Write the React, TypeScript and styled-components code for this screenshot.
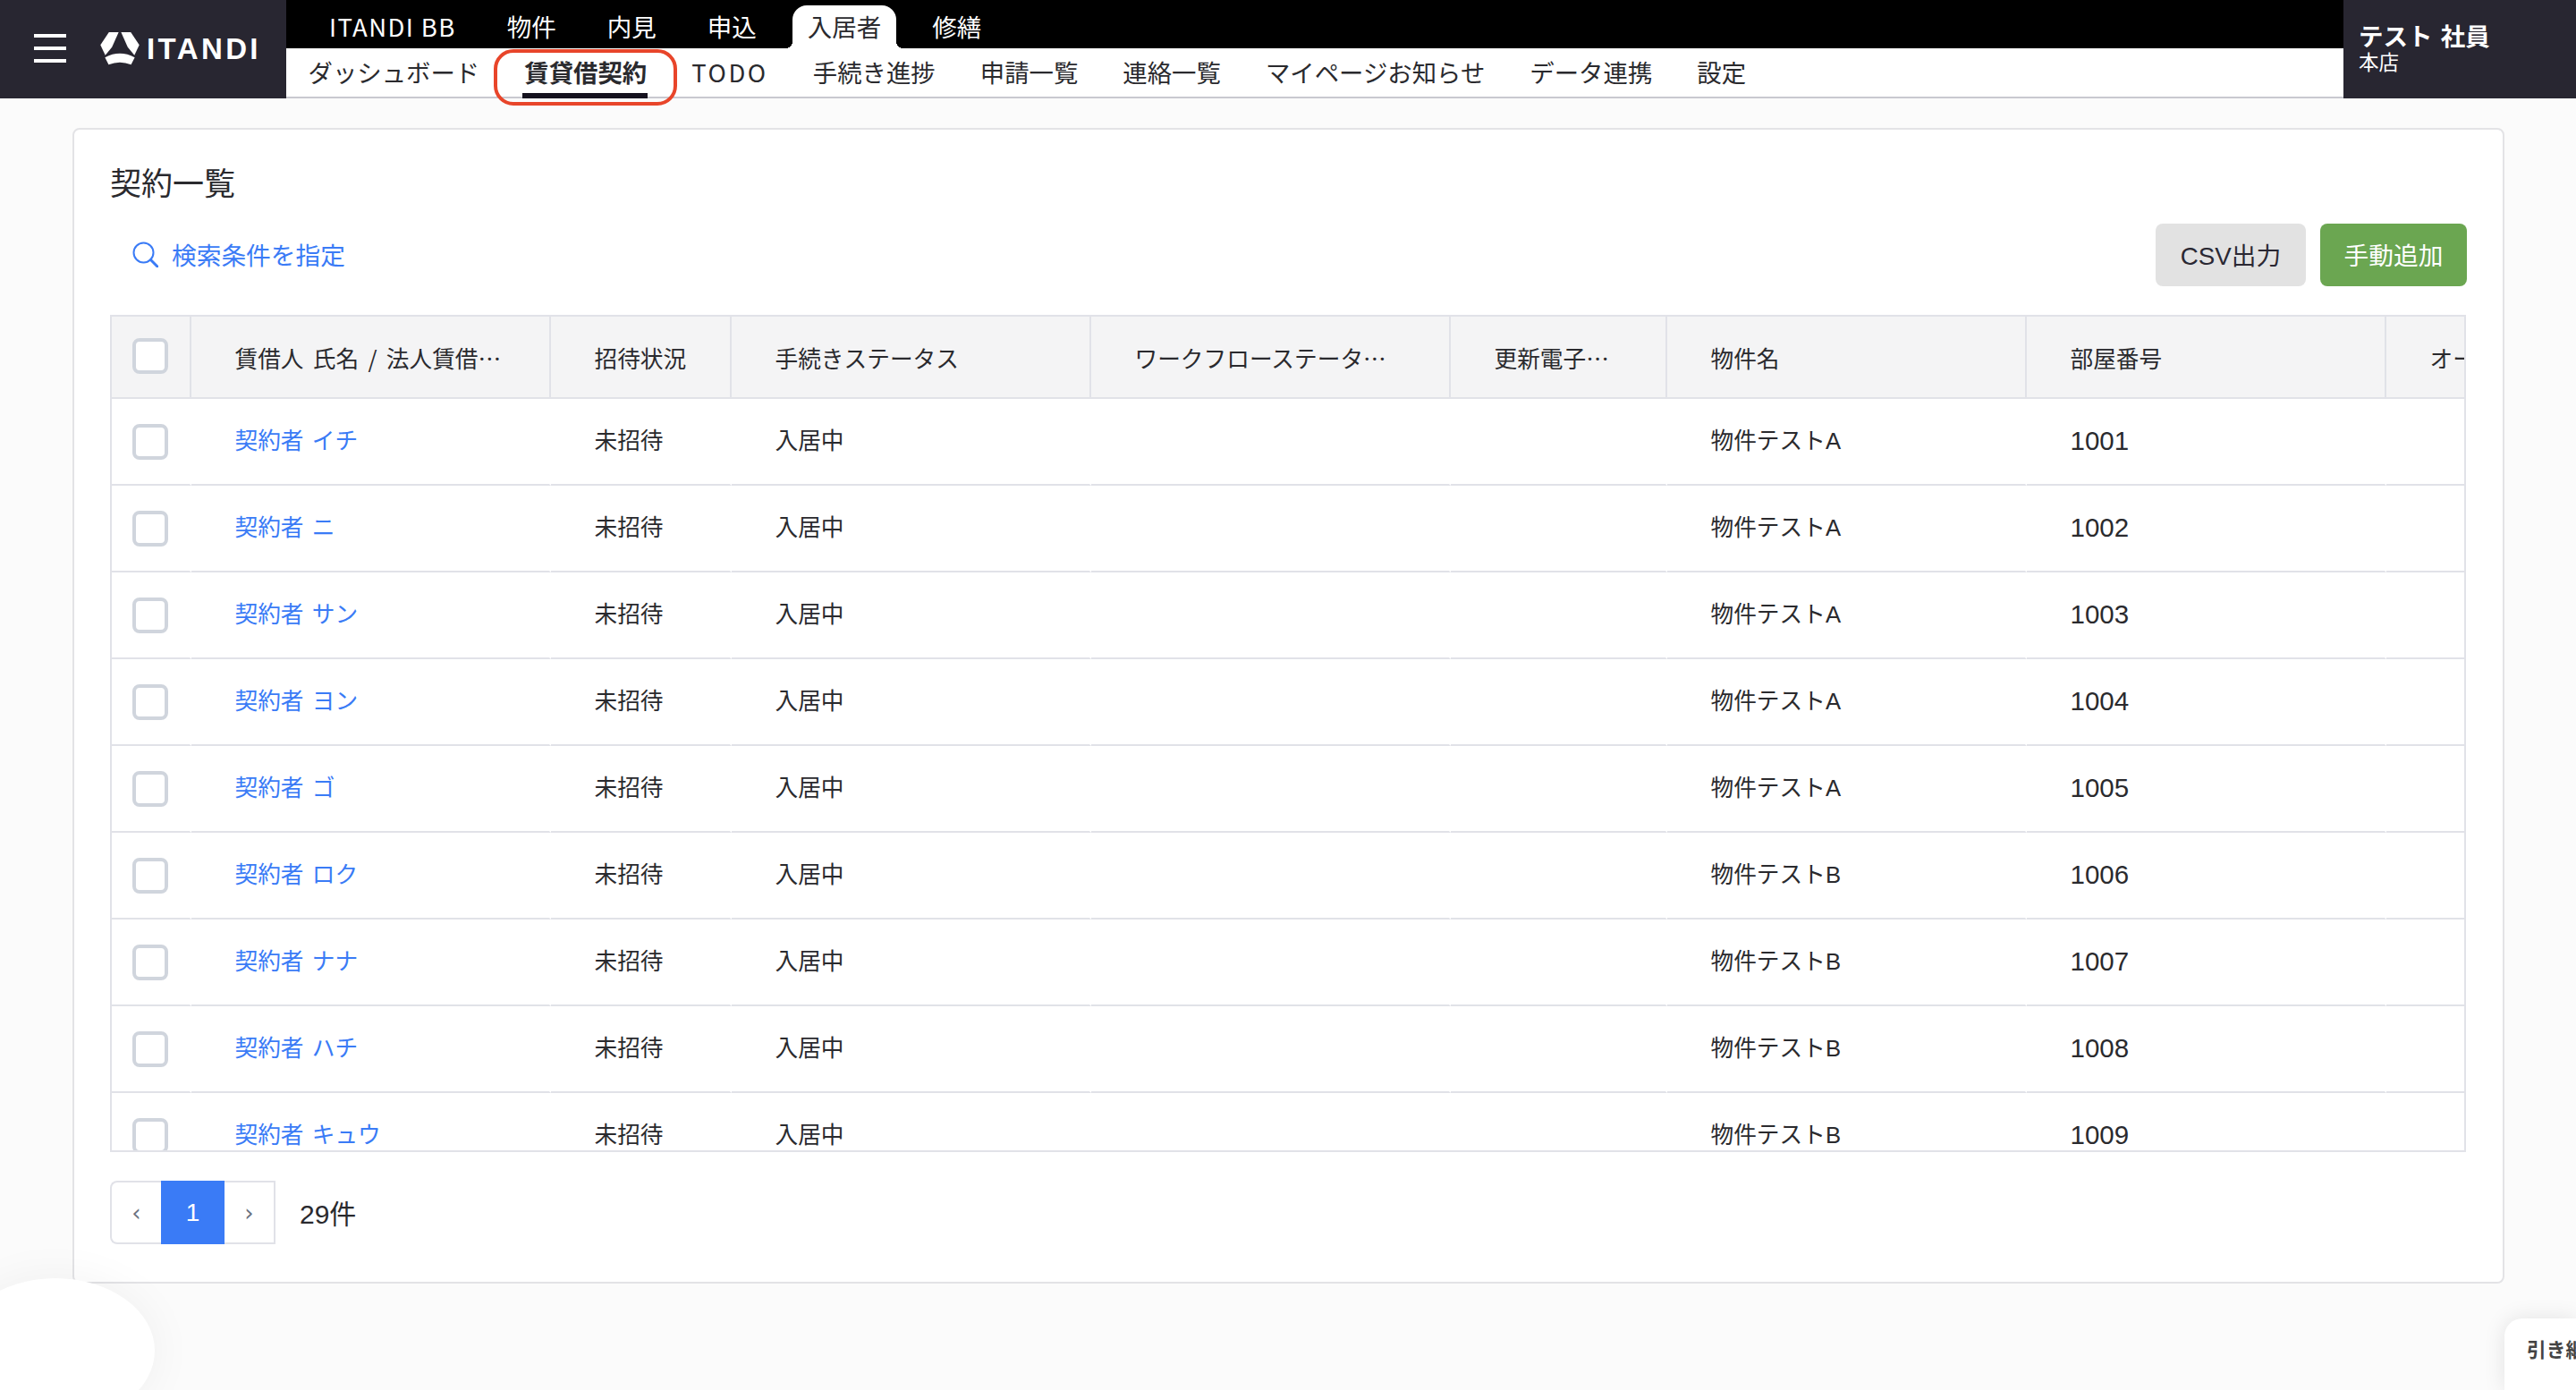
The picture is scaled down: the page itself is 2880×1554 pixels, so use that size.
import styled, { createGlobalStyle } from 'styled-components'

const latinFont = '"Liberation Sans", "Noto Sans CJK JP", sans-serif'
const jaFont = '"Noto Sans CJK JP", "Liberation Sans", sans-serif'

const GlobalStyle = createGlobalStyle`
  html, body {
    margin: 0;
    padding: 0;
    background: #fbfbfb;
  }
  body {
    font-family: ${latinFont};
    color: #2a2a2e;
    overflow: hidden;
  }
  * {
    box-sizing: border-box;
  }
`

const Page = styled.div`
  position: relative;
  width: 2880px;
  height: 1554px;
  overflow: hidden;
`

const Header = styled.header`
  display: grid;
  grid-template-columns: 320px 1fr 260px;
  height: 110px;
`

const Brand = styled.div`
  display: flex;
  align-items: center;
  gap: 38px;
  padding: 0 0 2px 38px;
  background: #282631;
`

const Burger = styled.div`
  display: flex;
  flex-direction: column;
  gap: 10px;
  width: 36px;

  span {
    display: block;
    height: 4px;
    background: #fff;
  }
`

const Logo = styled.div`
  display: flex;
  align-items: center;
  gap: 8px;
  color: #fff;
`

const LogoName = styled.span`
  font-family: "Liberation Sans", sans-serif;
  font-size: 33px;
  font-weight: 700;
  letter-spacing: 3.4px;
  line-height: 1;
`

const NavColumn = styled.div`
  display: flex;
  flex-direction: column;
`

const TopNav = styled.nav`
  display: flex;
  align-items: flex-end;
  gap: 23px;
  height: 54px;
  padding-left: 31px;
  background: #000;
`

const TopItem = styled.a<{ $active?: boolean; $latin?: boolean }>`
  position: relative;
  display: flex;
  align-items: center;
  height: 48px;
  padding: 0 17px 1px;
  border-radius: 16px 16px 0 0;
  font-family: ${jaFont};
  font-size: 27.5px;
  letter-spacing: ${(p) => (p.$latin ? '1.4px' : '0')};
  line-height: 1;
  color: ${(p) => (p.$active ? '#2a2a2e' : '#fff')};
  background: ${(p) => (p.$active ? '#fff' : 'transparent')};

  ${(p) =>
    p.$active &&
    `
    &::before, &::after {
      content: '';
      position: absolute;
      bottom: 0;
      width: 8px;
      height: 8px;
    }
    &::before {
      left: -8px;
      background: radial-gradient(circle at 0 0, transparent 8px, #fff 8px);
    }
    &::after {
      right: -8px;
      background: radial-gradient(circle at 100% 0, transparent 8px, #fff 8px);
    }
  `}
`

const SubNav = styled.nav`
  display: flex;
  align-items: stretch;
  gap: 50px;
  height: 56px;
  padding-left: 24.5px;
  background: #fff;
  border-bottom: 2px solid #c9c9d0;
`

const SubItem = styled.a<{ $active?: boolean; $latin?: boolean }>`
  position: relative;
  display: flex;
  align-items: center;
  font-family: ${jaFont};
  font-size: 27.4px;
  font-weight: ${(p) => (p.$active ? 700 : 400)};
  letter-spacing: ${(p) => (p.$latin ? '2.6px' : '0')};
  line-height: 1;
  white-space: nowrap;
  color: #2a2a2e;

  ${(p) =>
    p.$active &&
    `
    &::after {
      content: '';
      position: absolute;
      left: -2px;
      right: -1px;
      bottom: -2px;
      height: 6px;
      background: #15121f;
    }
  `}
`

const Callout = styled.span`
  position: absolute;
  top: 1px;
  left: -34px;
  right: -34px;
  height: 63px;
  border: 4px solid #e8452a;
  border-radius: 22px;
  z-index: 3;
`

const UserBox = styled.div`
  display: flex;
  flex-direction: column;
  justify-content: flex-start;
  padding: 24px 0 0 17px;
  background: #282631;
  color: #fff;
`

const UserName = styled.div`
  font-family: ${jaFont};
  font-size: 27.5px;
  font-weight: 700;
  line-height: 31px;
  word-spacing: 3px;
`

const UserShop = styled.div`
  font-family: ${jaFont};
  font-size: 22.5px;
  line-height: 26px;
`

const Main = styled.main`
  padding: 33px 80px 0 81px;
`

const Card = styled.section`
  height: 1292px;
  padding: 0 40px;
  background: #fff;
  border: 2px solid #e3e3e6;
  border-radius: 8px;
`

const Title = styled.h1`
  margin: 0;
  padding-top: 36px;
  font-family: ${jaFont};
  font-size: 35px;
  font-weight: 400;
  line-height: 44px;
  color: #2a2a2e;
`

const Toolbar = styled.div`
  display: flex;
  justify-content: space-between;
  align-items: flex-start;
  margin-top: 25px;
  height: 102px;
`

const SearchLink = styled.a`
  display: flex;
  align-items: center;
  gap: 15px;
  margin: 16px 0 0 25px;
  font-family: ${jaFont};
  font-size: 27.7px;
  line-height: 36px;
  color: #3a7bf6;
`

const Actions = styled.div`
  display: flex;
  gap: 16px;
`

const Button = styled.button<{ $primary?: boolean }>`
  display: flex;
  align-items: center;
  justify-content: center;
  height: 70px;
  padding: 0 0 2px;
  width: ${(p) => (p.$primary ? '164px' : '168px')};
  border: 0;
  border-radius: 8px;
  font-family: ${latinFont};
  font-size: 27.7px;
  color: ${(p) => (p.$primary ? '#fff' : '#2a2833')};
  background: ${(p) => (p.$primary ? '#6ba651' : '#e2e2e2')};
`

const TableFrame = styled.div`
  width: 2634px;
  height: 936px;
  overflow: hidden;
  border: 2px solid #e1e2e8;
`

const Table = styled.table`
  width: 2945px;
  table-layout: fixed;
  border-collapse: separate;
  border-spacing: 0;
`

const HeadCell = styled.th<{ $w: number }>`
  width: ${(p) => p.$w}px;
  height: 92px;
  padding: 1px 0 0 48.5px;
  background: #f4f4f5;
  border-right: 2px solid #e1e2e8;
  border-bottom: 2px solid #e1e2e8;
  font-family: ${jaFont};
  font-size: 25.7px;
  font-weight: 400;
  line-height: 1;
  word-spacing: 4.5px;
  text-align: left;
  white-space: nowrap;
  overflow: hidden;
  color: #2a2a2e;
`

const CheckHead = styled(HeadCell)`
  padding: 0 0 2px 23px;
`

const Cell = styled.td`
  height: 97px;
  padding: 0 0 0 48.5px;
  background: #fff;
  border-right: 2px solid #fff;
  border-bottom: 2px solid #e1e2e8;
  font-family: ${latinFont};
  font-size: 25.7px;
  line-height: 1;
  white-space: nowrap;
  color: #2a2a2e;
`

const CheckCell = styled(Cell)`
  padding: 0 0 0 23px;
`

const Check = styled.span`
  display: block;
  width: 40px;
  height: 40px;
  background: #fff;
  border: 4px solid #d0d5dd;
  border-radius: 8px;
`

const TenantLink = styled.a`
  word-spacing: 2px;
  color: #3a7bf6;
`

const Room = styled.span`
  font-size: 29.5px;
  vertical-align: 1px;
`

const Footer = styled.div`
  display: flex;
  align-items: center;
  gap: 27px;
  margin-top: 32px;
`

const Pager = styled.div`
  display: flex;
  height: 71px;
`

const PageStep = styled.a<{ $side: 'prev' | 'next' }>`
  display: flex;
  align-items: center;
  justify-content: center;
  width: 57px;
  border: 2px solid #e1e2e8;
  border-width: ${(p) => (p.$side === 'prev' ? '2px 0 2px 2px' : '2px 2px 2px 0')};
  border-radius: ${(p) => (p.$side === 'prev' ? '8px 0 0 8px' : '0')};
  font-family: "DejaVu Sans", sans-serif;
  font-size: 26px;
  color: #6b7280;
`

const PageCurrent = styled.a`
  display: flex;
  align-items: center;
  justify-content: center;
  width: 71px;
  font-size: 28px;
  color: #fff;
  background: #3a7bf6;
`

const Count = styled.span`
  margin-top: -2px;
  font-size: 30px;
  font-family: ${latinFont};
  color: #2a2a2e;
`

const ChatBlob = styled.div`
  position: absolute;
  left: -49px;
  top: 1429px;
  width: 222px;
  height: 162px;
  border-radius: 50%;
  background: #fff;
  box-shadow: 0 0 50px rgba(0, 0, 0, 0.05);
`

const HandoverTab = styled.div`
  position: absolute;
  left: 2800px;
  top: 1474px;
  width: 80px;
  height: 80px;
  padding: 22px 0 0 25px;
  overflow: hidden;
  border-radius: 20px 0 0 0;
  background: #fff;
  box-shadow: 0 0 24px rgba(0, 0, 0, 0.1);
  font-family: ${jaFont};
  font-size: 21.7px;
  font-weight: 700;
  line-height: 1.1;
  white-space: nowrap;
  color: #444;
`

const topItems = ['ITANDI BB', '物件', '内見', '申込', '入居者', '修繕']
const subItems = ['ダッシュボード', '賃貸借契約', 'TODO', '手続き進捗', '申請一覧', '連絡一覧', 'マイページお知らせ', 'データ連携', '設定']

const columns = [
  { label: '賃借人 氏名 / 法人賃借…', width: 402 },
  { label: '招待状況', width: 202 },
  { label: '手続きステータス', width: 402 },
  { label: 'ワークフローステータ…', width: 402 },
  { label: '更新電子…', width: 242 },
  { label: '物件名', width: 402 },
  { label: '部屋番号', width: 402 },
  { label: 'オーナー名', width: 402 },
]

const contracts = [
  { name: '契約者 イチ', building: '物件テストA', room: '1001' },
  { name: '契約者 ニ', building: '物件テストA', room: '1002' },
  { name: '契約者 サン', building: '物件テストA', room: '1003' },
  { name: '契約者 ヨン', building: '物件テストA', room: '1004' },
  { name: '契約者 ゴ', building: '物件テストA', room: '1005' },
  { name: '契約者 ロク', building: '物件テストB', room: '1006' },
  { name: '契約者 ナナ', building: '物件テストB', room: '1007' },
  { name: '契約者 ハチ', building: '物件テストB', room: '1008' },
  { name: '契約者 キュウ', building: '物件テストB', room: '1009' },
]

function LogoMark() {
  return (
    <svg width="44" height="38" viewBox="0 0 128 112" fill="#fff">
      <path d="M28 3 L60 3 L38 52 L16 79 L0 45 Z" />
      <path d="M68 3 L100 3 L128 45 L112 79 L90 52 Z" />
      <path d="M15 86 Q64 60 113 86 L101 110 Q64 95 27 110 Z" />
    </svg>
  )
}

function SearchIcon() {
  return (
    <svg width="29" height="29" viewBox="0 0 29 29" fill="none" stroke="#3a7bf6" strokeWidth="2">
      <circle cx="12.5" cy="12.5" r="11" />
      <path d="M20.5 20.5 L28 28" strokeLinecap="round" strokeWidth="3" />
    </svg>
  )
}

export default function App() {
  return (
    <Page>
      <GlobalStyle />
      <Header>
        <Brand>
          <Burger>
            <span />
            <span />
            <span />
          </Burger>
          <Logo>
            <LogoMark />
            <LogoName>ITANDI</LogoName>
          </Logo>
        </Brand>
        <NavColumn>
          <TopNav>
            {topItems.map((item) => (
              <TopItem key={item} $active={item === '入居者'} $latin={item === 'ITANDI BB'}>
                {item}
              </TopItem>
            ))}
          </TopNav>
          <SubNav>
            {subItems.map((item) => (
              <SubItem key={item} $active={item === '賃貸借契約'} $latin={item === 'TODO'}>
                {item}
                {item === '賃貸借契約' && <Callout />}
              </SubItem>
            ))}
          </SubNav>
        </NavColumn>
        <UserBox>
          <UserName>テスト 社員</UserName>
          <UserShop>本店</UserShop>
        </UserBox>
      </Header>

      <Main>
        <Card>
          <Title>契約一覧</Title>
          <Toolbar>
            <SearchLink>
              <SearchIcon />
              検索条件を指定
            </SearchLink>
            <Actions>
              <Button>CSV出力</Button>
              <Button $primary>手動追加</Button>
            </Actions>
          </Toolbar>
          <TableFrame>
            <Table>
              <thead>
                <tr>
                  <CheckHead $w={89}>
                    <Check />
                  </CheckHead>
                  {columns.map((col) => (
                    <HeadCell key={col.label} $w={col.width}>
                      {col.label}
                    </HeadCell>
                  ))}
                </tr>
              </thead>
              <tbody>
                {contracts.map((row) => (
                  <tr key={row.room}>
                    <CheckCell>
                      <Check />
                    </CheckCell>
                    <Cell>
                      <TenantLink>{row.name}</TenantLink>
                    </Cell>
                    <Cell>未招待</Cell>
                    <Cell>入居中</Cell>
                    <Cell />
                    <Cell />
                    <Cell>{row.building}</Cell>
                    <Cell>
                      <Room>{row.room}</Room>
                    </Cell>
                    <Cell />
                  </tr>
                ))}
              </tbody>
            </Table>
          </TableFrame>
          <Footer>
            <Pager>
              <PageStep $side="prev">‹</PageStep>
              <PageCurrent>1</PageCurrent>
              <PageStep $side="next">›</PageStep>
            </Pager>
            <Count>29件</Count>
          </Footer>
        </Card>
      </Main>

      <ChatBlob />
      <HandoverTab>引き継ぎ</HandoverTab>
    </Page>
  )
}
